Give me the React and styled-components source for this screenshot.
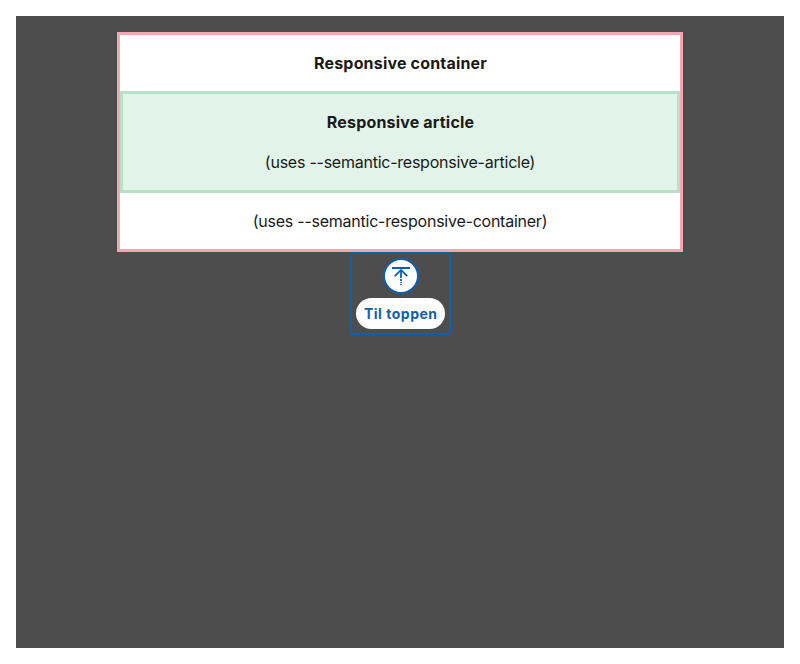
import React from 'react';
import styled, { createGlobalStyle } from 'styled-components';

const GlobalStyle = createGlobalStyle`
  *, *::before, *::after { box-sizing: border-box; }
  body {
    margin: 0;
    padding: 16px;
    background: #fff;
    color: #1a1a1a;
    font: 400 16px/24px Inter, sans-serif;
  }
`;

const Page = styled.main`
  height: 632px;
  padding: 16px 0;
  background: #4d4d4d;
  display: flex;
  flex-direction: column;
  align-items: center;
`;

const Container = styled.section`
  width: 566px;
  border: 3px solid #f3a5b2;
  background: #fff;
  text-align: center;
`;

const Article = styled.article`
  border: 3px solid #b8e0c8;
  background: #e2f3e9;
`;

const Text = styled.p`
  margin: 0;
  padding: 16px 0 16px ${({ $bold }) => ($bold ? '1px' : '0')};
  font-weight: ${({ $bold }) => ($bold ? 700 : 400)};
  letter-spacing: ${({ $bold }) => ($bold ? '0.18px' : '-0.24px')};
`;

const ArticleNote = styled(Text)`
  padding-top: 0;
`;

const ToTop = styled.a`
  width: 101px;
  height: 83px;
  margin-left: 1px;
  padding: 4px;
  border: 2px solid #0f5fae;
  border-radius: 4px;
  display: flex;
  flex-direction: column;
  align-items: center;
  gap: 4px;
  color: #0f5fae;
  text-decoration: none;
`;

const IconCircle = styled.span`
  width: 36px;
  height: 36px;
  border: 2px solid currentColor;
  border-radius: 50%;
  background: #fff;
  display: grid;
  place-items: center;
`;

const Label = styled.span`
  width: 89px;
  padding: 4px 0 4px 0.5px;
  border-radius: 16px;
  background: #fff;
  font-size: 14px;
  font-weight: 700;
  line-height: 23px;
  letter-spacing: 0.5px;
  text-align: center;
  white-space: nowrap;
`;

export default function App() {
  return (
    <>
      <GlobalStyle />
      <Page>
        <Container>
          <Text $bold>Responsive container</Text>
          <Article>
            <Text $bold>Responsive article</Text>
            <ArticleNote>(uses --semantic-responsive-article)</ArticleNote>
          </Article>
          <Text>(uses --semantic-responsive-container)</Text>
        </Container>
        <ToTop href="#">
          <IconCircle>
            <svg width="20" height="20" viewBox="0 0 20 20" fill="none" stroke="currentColor" strokeWidth="1.8">
              <path d="M1 2H19M3.7 10.2L10 3.9L16.3 10.2M10 4V12M10 13V15M10 16V17M10 18V19" />
            </svg>
          </IconCircle>
          <Label>Til toppen</Label>
        </ToTop>
      </Page>
    </>
  );
}
